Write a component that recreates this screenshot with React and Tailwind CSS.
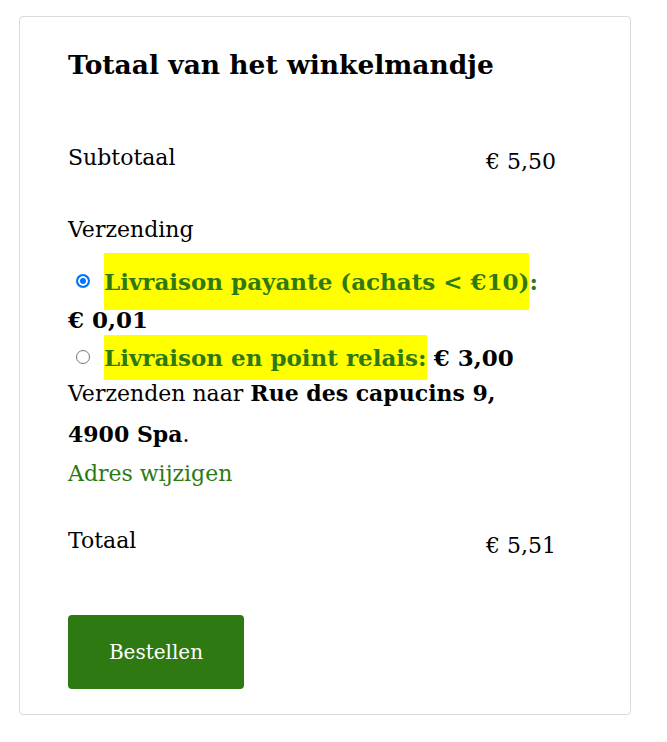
import { useState } from 'react';

const radioClass =
  'appearance-none m-0 ml-[8px] mr-[14px] w-[14px] h-[14px] rounded-full border border-[#767676] bg-white align-middle relative -top-[3px] checked:border-2 checked:border-[#0075ff] checked:bg-[#0075ff] checked:shadow-[inset_0_0_0_2px_white]';

export default function App() {
  const [method, setMethod] = useState('payante');

  return (
    <div className="min-h-screen bg-white pt-[16px] pl-[19px] font-['DejaVu_Serif',serif] text-black">
      <div className="w-[612px] border border-[#d9d9de] rounded-[4px] pl-[48px] pr-[74px] pt-[33px] pb-[25px]">
        <h2 className="text-[26.5px] leading-[30px] font-bold whitespace-nowrap">Totaal van het winkelmandje</h2>

        {/* Subtotal */}
        <div className="mt-[59px] flex justify-between text-[22px] leading-[38px]">
          <span>Subtotaal</span>
          <span className="pt-[4px]">€ 5,50</span>
        </div>

        {/* Shipping */}
        <div className="mt-[30px] text-[22px] leading-[38px]">Verzending</div>
        <ul className="mt-[14px] text-[23px] leading-[38px]">
          <li>
            <label className="cursor-pointer">
              <input
                type="radio"
                name="shipping"
                checked={method === 'payante'}
                onChange={() => setMethod('payante')}
                className={radioClass}
              />
              <span className="font-bold text-[#2e7a12]">
                <span className="bg-[#ffff00] py-[15px]">Livraison payante (achats &lt; €10)</span>:
              </span>{' '}
              <strong className="whitespace-nowrap">€ 0,01</strong>
            </label>
          </li>
          <li className="whitespace-nowrap">
            <label className="cursor-pointer">
              <input
                type="radio"
                name="shipping"
                checked={method === 'relais'}
                onChange={() => setMethod('relais')}
                className={radioClass}
              />
              <span className="font-bold text-[#2e7a12] bg-[#ffff00] py-[9px]">Livraison en point relais:</span>{' '}
              <strong>€ 3,00</strong>
            </label>
          </li>
        </ul>
        <p className="-mt-[4px] text-[22px] leading-[40px]">
          Verzenden naar <strong>Rue des capucins 9, 4900 Spa</strong>.
        </p>
        <a href="#" className="block text-[22px] leading-[38px] text-[#2e7a12]">Adres wijzigen</a>

        {/* Total */}
        <div className="mt-[29px] flex justify-between text-[22px] leading-[38px]">
          <span>Totaal</span>
          <span className="pt-[5px]">€ 5,51</span>
        </div>

        <button className="mt-[50px] w-[176px] h-[74px] rounded-[4px] bg-[#2e7912] text-white text-[20px]">
          Bestellen
        </button>
      </div>
    </div>
  );
}
